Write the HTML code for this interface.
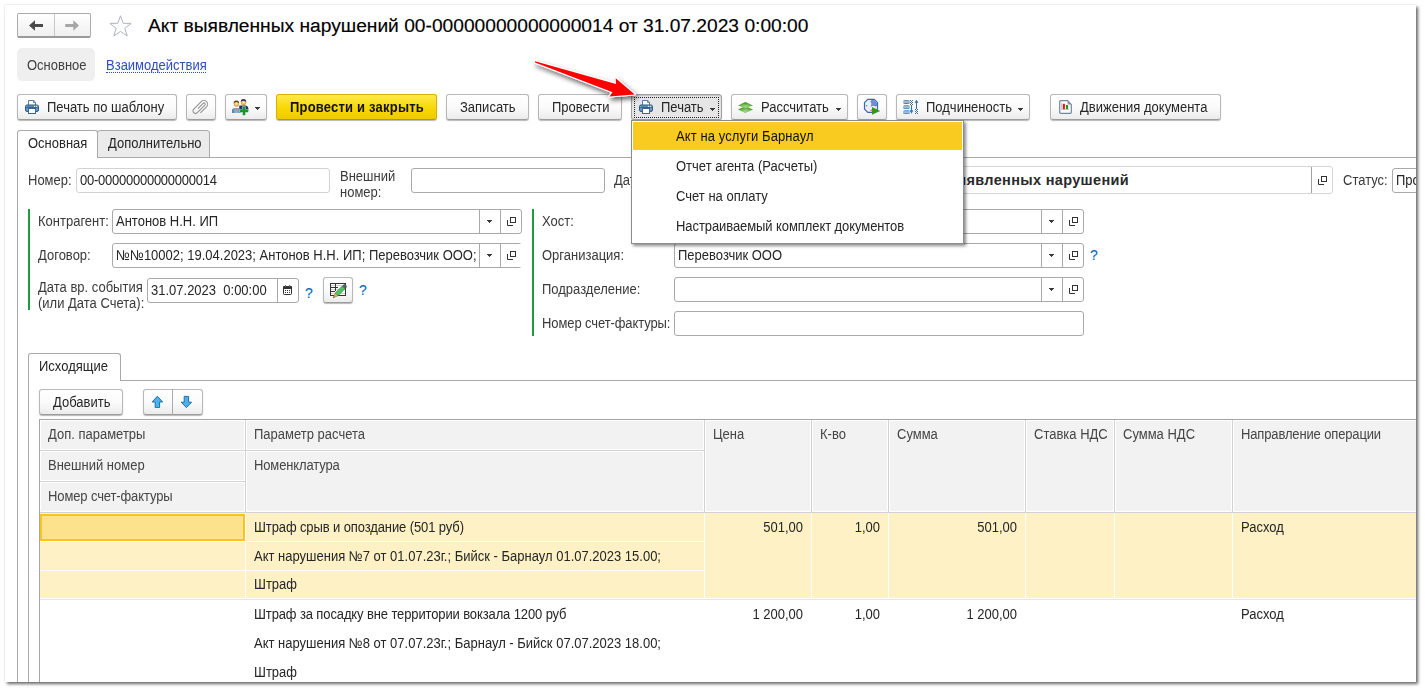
<!DOCTYPE html>
<html><head><meta charset="utf-8">
<style>
*{box-sizing:border-box;margin:0;padding:0}
html,body{width:1425px;height:691px;background:#fff;overflow:hidden;font-family:"Liberation Sans",sans-serif;font-size:13px;color:#262626}
#win{position:absolute;left:5px;top:5px;width:1411px;height:677px;background:#fff;overflow:hidden;box-shadow:2px 2px 3px rgba(0,0,0,.6), -1px -1px 1px rgba(0,0,0,.04)}
#c{position:absolute;left:-5px;top:-5px;width:1425px;height:691px}
.a{position:absolute}
.t{position:absolute;white-space:nowrap;line-height:15px;height:15px;transform:scaleY(1.1);transform-origin:0 12px}
.btn{position:absolute;top:94px;height:26px;border:1px solid #b8b8b8;border-bottom-color:#9c9c9c;border-radius:3px;background:linear-gradient(#ffffff 0%,#fbfbfb 50%,#ececec 100%);box-shadow:0 1px 1px rgba(0,0,0,.28)}
.btn .t{top:5px}
.fld{position:absolute;height:25px;border:1px solid #a9a9a9;border-radius:3px;background:#fff}
.fld .t{top:4px;left:3px}
.sep{position:absolute;top:0;bottom:0;width:1px;background:#a9a9a9}
.dd{position:absolute;width:5px;height:1px;background:#3a3a3a}.dd::before{content:"";position:absolute;left:1px;top:1px;width:3px;height:1px;background:#3a3a3a}.dd::after{content:"";position:absolute;left:2px;top:2px;width:1px;height:1px;background:#3a3a3a}
.lbl{position:absolute;white-space:nowrap;line-height:15px;color:#3a3a3a;transform:scaleY(1.1);transform-origin:0 12px}
.green{position:absolute;width:2px;background:#1e9b3c}
.q{position:absolute;color:#0b6bbd;font-size:14px;line-height:15px;-webkit-text-stroke:.15px #0b6bbd}
.hc{position:absolute;background:#f2f2f2;border:1px solid #fff}
.hl{position:absolute;background:#cfcfcf}
</style></head><body>
<div id="win"><div id="c">

<!-- nav -->
<div class="a" style="left:17px;top:13px;width:74px;height:25px;border:1px solid #ababab;border-bottom:2px solid #9a9a9a;border-radius:2px;background:linear-gradient(#fff,#efefef)"></div>
<div class="a" style="left:54px;top:14px;width:1px;height:22px;background:#c8c8c8"></div>

<!-- title -->
<div class="t" style="left:148px;top:15px;font-size:19.2px;line-height:22px;height:22px;transform:none;color:#000;-webkit-text-stroke:.15px #000">Акт выявленных нарушений 00-00000000000000014 от 31.07.2023 0:00:00</div>

<!-- section nav -->
<div class="a" style="left:17px;top:48px;width:78px;height:33px;background:#efefef;border-radius:5px"></div>
<div class="t" style="left:27px;top:58px;color:#404040">Основное</div>
<div class="t" style="left:106px;top:58px;color:#2b4fbd">Взаимодействия</div>
<div class="a" style="left:106px;top:72px;width:100px;height:0;border-top:1px dotted #2b4fbd"></div>


<!-- nav arrows -->
<svg class="a" style="left:28px;top:19px" width="16" height="13" viewBox="0 0 16 13"><path d="M1 6.5 L7 1.2 V5.1 H15 V7.9 H7 V11.8 Z" fill="#4a4a4a"/></svg>
<svg class="a" style="left:64px;top:19px" width="16" height="13" viewBox="0 0 16 13"><path d="M15 6.5 L9.3 1.2 V5.1 H1.2 V7.9 H9.3 V11.8 Z" fill="#a6a6a6"/></svg>
<!-- star -->
<svg class="a" style="left:107px;top:14px" width="26" height="24" viewBox="0 0 26 24"><path d="M13.5 1.8 L16.2 9.3 L24.1 9.4 L17.8 14.3 L20.2 22 L13.5 17.4 L6.8 22 L9.2 14.3 L2.9 9.4 L10.8 9.3 Z" fill="none" stroke="#adb5bf" stroke-width="1"/></svg>

<!-- toolbar -->
<div class="btn" style="left:17px;width:160px"><span class="t" style="left:29px">Печать по шаблону</span></div>
<div class="btn" style="left:186px;width:30px"></div>
<div class="btn" style="left:225px;width:42px"></div>
<div class="btn" style="left:276px;width:161px;border-color:#d4b200;border-bottom-color:#b89a00;background:linear-gradient(#ffe94a,#f7d600 60%,#efc900)"><span class="t" style="left:13px;font-weight:bold;color:#111;letter-spacing:.2px">Провести и закрыть</span></div>
<div class="btn" style="left:446px;width:83px"><span class="t" style="left:13px">Записать</span></div>
<div class="btn" style="left:538px;width:84px"><span class="t" style="left:13px">Провести</span></div>
<div class="btn" style="left:631px;width:91px;background:#e6e6e6;border-color:#a0a0a0;box-shadow:inset 0 1px 1px rgba(0,0,0,.15), 0 1px 1px rgba(0,0,0,.2)"><div class="a" style="left:2px;top:2px;right:2px;bottom:1px;border:1px dotted #222"></div><span class="t" style="left:29px">Печать</span><div class="dd" style="left:78px;top:13px"></div></div>
<div class="btn" style="left:731px;width:117px"><span class="t" style="left:29px">Рассчитать</span><div class="dd" style="left:104px;top:13px"></div></div>
<div class="btn" style="left:857px;width:30px"></div>
<div class="btn" style="left:896px;width:134px"><span class="t" style="left:29px">Подчиненость</span><div class="dd" style="left:121px;top:13px"></div></div>
<div class="btn" style="left:1050px;width:171px"><span class="t" style="left:29px">Движения документа</span></div>
<div class="dd" style="left:255px;top:107px"></div>

<!-- toolbar icons -->
<svg class="a" style="left:25px;top:100px" width="14" height="14" viewBox="0 0 14 14"><path d="M3.5 5 V0.5 H8.8 L10.5 2.2 V5" fill="#fff" stroke="#5d7d9c"/><path d="M8.5 0.5 V2.5 H10.5" fill="#7f9ab4" stroke="#5d7d9c" stroke-width=".8"/><rect x="0.5" y="5" width="13" height="6.5" rx="1.6" fill="#6b99c6" stroke="#2a5882"/><rect x="1.5" y="6.8" width="11" height="1" fill="#2a5882"/><rect x="9" y="5.8" width="1.2" height="1" fill="#fff"/><rect x="11" y="5.8" width="1.2" height="1" fill="#fff"/><rect x="3.5" y="8.5" width="7" height="5" fill="#fff" stroke="#3b6890"/></svg>
<svg class="a" style="left:639px;top:100px" width="14" height="14" viewBox="0 0 14 14"><path d="M3.5 5 V0.5 H8.8 L10.5 2.2 V5" fill="#fff" stroke="#5d7d9c"/><path d="M8.5 0.5 V2.5 H10.5" fill="#7f9ab4" stroke="#5d7d9c" stroke-width=".8"/><rect x="0.5" y="5" width="13" height="6.5" rx="1.6" fill="#6b99c6" stroke="#2a5882"/><rect x="1.5" y="6.8" width="11" height="1" fill="#2a5882"/><rect x="9" y="5.8" width="1.2" height="1" fill="#fff"/><rect x="11" y="5.8" width="1.2" height="1" fill="#fff"/><rect x="3.5" y="8.5" width="7" height="5" fill="#fff" stroke="#3b6890"/></svg>
<!-- paperclip -->
<svg class="a" style="left:190px;top:97px" width="24" height="20" viewBox="0 0 24 20"><path transform="translate(10.5 10.4) rotate(45) translate(-3.6 -8.7)" d="M2.6 11.3 V4 A1.25 1.25 0 0 1 5.1 4 V14.7 A2.55 2.55 0 0 1 0 14.7 V4 A3.7 3.7 0 0 1 7.4 4 V12.6" fill="none" stroke="#8f8f8f" stroke-width="1.05"/></svg>
<!-- users -->
<svg class="a" style="left:230px;top:97px" width="20" height="20" viewBox="0 0 20 20">
<defs><radialGradient id="face" cx=".5" cy=".45" r=".6"><stop offset="0" stop-color="#fff2b0"/><stop offset=".6" stop-color="#e9b85a"/><stop offset="1" stop-color="#b57a2a"/></radialGradient>
<linearGradient id="lb" x1="0" x2="1"><stop offset="0" stop-color="#4b7aa6"/><stop offset=".5" stop-color="#9fbbd4"/><stop offset="1" stop-color="#4b7aa6"/></linearGradient></defs>
<path d="M9.2 8.8 Q9.6 8.2 11.2 8.6 L15.8 8.6 Q17.9 8.8 18.3 11 V14 H9.2Z" fill="#27306a"/>
<circle cx="13.5" cy="5.6" r="2.6" fill="url(#face)"/><path d="M10.8 5.3 Q10.6 2 13.5 2 Q16.4 2 16.2 5.3 Q15.6 3.6 13.5 3.7 Q11.4 3.6 10.8 5.3Z" fill="#2b2c58"/>
<path d="M2 16 V13.3 Q2 11 4.4 10.9 L8.4 10.9 Q10.8 11 10.8 13.3 V16 Z" fill="url(#lb)"/><path d="M5.9 11 L6.4 16 L7 11 Z" fill="#e86a45"/>
<circle cx="6.4" cy="6.9" r="2.6" fill="url(#face)"/><path d="M3.7 6.7 Q3.5 3.4 6.4 3.4 Q9.3 3.4 9.1 6.7 Q8.5 5 6.4 5.1 Q4.3 5 3.7 6.7Z" fill="#6a3810"/>
<path d="M12.7 9.6 H15.3 V12.6 H18.3 V15.2 H15.3 V18.2 H12.7 V15.2 H9.7 V12.6 H12.7 Z" fill="#179532" stroke="#fff" stroke-width=".7" paint-order="stroke"/>
</svg>
<!-- layers -->
<svg class="a" style="left:734px;top:97px" width="24" height="20" viewBox="0 0 24 20"><defs><radialGradient id="lg" cx=".5" cy=".75" r=".6"><stop offset="0" stop-color="#a6dc80"/><stop offset="1" stop-color="#3f9424"/></radialGradient></defs><path d="M11.3 9 L19 12.4 L11.3 15.9 L4 12.4 Z" fill="url(#lg)"/><path d="M11.3 4.9 L19 8.4 L11.3 10.9 L4 8.4 Z" fill="url(#lg)" stroke="#fff" stroke-width=".5" paint-order="stroke"/></svg>
<!-- clock -->
<svg class="a" style="left:861px;top:96px" width="22" height="21" viewBox="0 0 22 21"><path d="M6.8 3.4 H13.2 L16.5 6.7 V13.1 L13.2 16.4 H6.8 L3.5 13.1 V6.7 Z" fill="#e9f0fb" stroke="#3b64ae" stroke-width="1.2"/><path d="M10.2 9.9 V3.9 H13 L16 6.9 V9.9 Z" fill="#6b8fd0"/><circle cx="10.2" cy="9.9" r=".5" fill="#3b64ae"/><circle cx="10.2" cy="5.5" r=".75" fill="#f24a3a"/><circle cx="5.6" cy="9.8" r=".75" fill="#f24a3a"/><circle cx="14.5" cy="9.8" r=".75" fill="#f24a3a"/><circle cx="10.2" cy="14.3" r=".75" fill="#f24a3a"/><path d="M11 11 L19.2 15 L11 18.8 Z" fill="#2f9a12"/></svg>
<!-- hierarchy -->
<svg class="a" style="left:900px;top:97px" width="22" height="20" viewBox="0 0 22 20"><defs><linearGradient id="bg1" x1="0" y1="0" x2="0" y2="1"><stop offset="0" stop-color="#4a7aa8"/><stop offset=".5" stop-color="#b9d0e4"/><stop offset="1" stop-color="#3e6e9c"/></linearGradient></defs>
<rect x="3" y="3" width="7" height="3.9" rx="1.9" fill="url(#bg1)"/><rect x="3" y="8.2" width="7" height="3.9" rx="1.9" fill="url(#bg1)"/><rect x="3" y="13.2" width="7" height="3.9" rx="1.9" fill="url(#bg1)"/>
<g fill="#3e6fa0"><rect x="10" y="3" width="1" height="1"/><rect x="12" y="3" width="1" height="1"/><rect x="11" y="4" width="1" height="1"/><rect x="10" y="5" width="1" height="1"/><rect x="12" y="5" width="1" height="1"/><rect x="11" y="6" width="1" height="1"/><rect x="10" y="7" width="1" height="1"/><rect x="12" y="7" width="1" height="1"/>
<rect x="15" y="12" width="1" height="1"/><rect x="17" y="12" width="1" height="1"/><rect x="16" y="13" width="1" height="1"/><rect x="15" y="14" width="1" height="1"/><rect x="17" y="14" width="1" height="1"/><rect x="16" y="15" width="1" height="1"/><rect x="15" y="16" width="1" height="1"/><rect x="17" y="16" width="1" height="1"/></g>
<path d="M11.5 8 V14" stroke="#3e6fa0" stroke-width="1.1"/><path d="M9.6 13.2 H13.4 L11.5 16.8Z" fill="#3e6fa0"/>
<path d="M16.5 5 V12" stroke="#3e6fa0" stroke-width="1.1"/><path d="M14.4 5.8 H18.6 L16.5 2.8Z" fill="#3e6fa0"/></svg>
<!-- doc chart -->
<svg class="a" style="left:1059px;top:100px" width="13" height="14" viewBox="0 0 13 14"><path d="M0.7 1.7 Q0.7 0.7 1.7 0.7 H8.6 L12.3 4.4 V12.3 Q12.3 13.3 11.3 13.3 H1.7 Q0.7 13.3 0.7 12.3 Z" fill="#fff" stroke="#71859a" stroke-width="1.2"/><path d="M8.6 0.7 V4.4 H12.3 Z" fill="#8596a8"/><path d="M2.6 2.8 V9.5" stroke="#9fb0c0" stroke-width=".7"/><path d="M2.6 9.4 H10" stroke="#c9a0a0" stroke-width=".7"/><rect x="3.8" y="3.8" width="2.1" height="5.4" fill="#ee1111"/><rect x="7" y="5" width="2.1" height="4.2" fill="#1a9a25"/></svg>

<!-- outer tabs -->
<div class="a" style="left:17px;top:157px;width:1400px;height:1px;background:#a9a9a9"></div>
<div class="a" style="left:17px;top:157px;width:1px;height:530px;background:#a9a9a9"></div>
<div class="a" style="left:97px;top:130px;width:113px;height:28px;background:#ebebeb;border:1px solid #a9a9a9;border-radius:3px 3px 0 0"></div>
<div class="a" style="left:17px;top:130px;width:81px;height:28px;background:#fff;border:1px solid #a9a9a9;border-bottom:none;border-radius:3px 3px 0 0"></div>
<div class="t" style="left:28px;top:136px">Основная</div>
<div class="t" style="left:108px;top:136px">Дополнительно</div>

<!-- row 1 -->
<div class="lbl" style="left:28px;top:173px">Номер:</div>
<div class="fld" style="left:76px;top:168px;width:254px;border-color:#d2d2d2"><span class="t" style="letter-spacing:-.25px">00-00000000000000014</span></div>
<div class="lbl" style="left:340px;top:169px">Внешний</div><div class="lbl" style="left:340px;top:185px">номер:</div>
<div class="fld" style="left:411px;top:168px;width:194px"></div>
<div class="lbl" style="left:614px;top:173px">Дата:</div>
<div class="fld" style="left:700px;top:166px;width:633px;height:28px;border-color:#d6d6d6"><span class="t" style="left:auto;right:203px;top:5px;font-size:14.5px;line-height:17px;height:17px;transform:none;font-weight:bold;letter-spacing:.33px;color:#2a2a2a">Акт выявленных нарушений</span><div class="sep" style="left:610px;background:#a0a0a0"></div>
<svg class="a" style="left:617px;top:9px" width="10" height="10" viewBox="0 0 10 10"><rect x="3.5" y="0.5" width="5" height="5" fill="none" stroke="#333"/><path d="M0.5 3 V8.5 H6" fill="none" stroke="#333"/></svg></div>
<div class="lbl" style="left:1343px;top:173px">Статус:</div>
<div class="fld" style="left:1392px;top:168px;width:80px;border-color:#a9a9a9"><span class="t">Проведен</span></div>

<!-- left group -->
<div class="green" style="left:28px;top:209px;height:101px"></div>
<div class="lbl" style="left:38px;top:214px">Контрагент:</div>
<div class="fld" style="left:112px;top:209px;width:410px"><span class="t">Антонов Н.Н. ИП</span><div class="sep" style="left:366px"></div><div class="sep" style="left:387px"></div><div class="dd" style="left:374px;top:10px"></div><svg class="a" style="left:394px;top:7px" width="10" height="10" viewBox="0 0 10 10"><rect x="3.5" y="0.5" width="5" height="5" fill="none" stroke="#333"/><path d="M0.5 3 V8.5 H6" fill="none" stroke="#333"/></svg></div>
<div class="lbl" style="left:38px;top:248px">Договор:</div>
<div class="fld" style="left:112px;top:243px;width:410px"><span class="t">№№10002; 19.04.2023; Антонов Н.Н. ИП; Перевозчик ООО;</span><div class="a" style="left:366px;top:0;bottom:0;width:43px;background:#fff"></div><div class="sep" style="left:366px"></div><div class="sep" style="left:387px"></div><div class="dd" style="left:374px;top:10px"></div><svg class="a" style="left:394px;top:7px" width="10" height="10" viewBox="0 0 10 10"><rect x="3.5" y="0.5" width="5" height="5" fill="none" stroke="#333"/><path d="M0.5 3 V8.5 H6" fill="none" stroke="#333"/></svg></div>
<div class="lbl" style="left:38px;top:280px">Дата вр. события</div><div class="lbl" style="left:38px;top:296px">(или Дата Счета):</div>
<div class="fld" style="left:147px;top:278px;width:152px"><span class="t">31.07.2023&nbsp; 0:00:00</span><div class="sep" style="left:129px"></div>
<svg class="a" style="left:135px;top:6px" width="10" height="11" viewBox="0 0 10 11"><rect x="0.5" y="1.5" width="8" height="8" rx=".8" fill="#fff" stroke="#333"/><rect x="0" y="1" width="9" height="3" rx=".8" fill="#333"/><rect x="2" y="0" width="1" height="2" fill="#666"/><rect x="6" y="0" width="1" height="2" fill="#666"/><g fill="#333"><rect x="2" y="5" width="1" height="1"/><rect x="4" y="5" width="1" height="1"/><rect x="6" y="5" width="1" height="1"/><rect x="2" y="7" width="1" height="1"/><rect x="4" y="7" width="1" height="1"/><rect x="6" y="7" width="1" height="1"/></g></svg></div>
<div class="q" style="left:305px;top:286px">?</div>
<div class="btn" style="left:323px;top:277px;width:30px;height:26px"></div>
<svg class="a" style="left:326px;top:279px" width="24" height="22" viewBox="0 0 24 22"><rect x="4.5" y="4.5" width="15" height="12" fill="#fff" stroke="#333"/><path d="M5 6.6 H19 M5 10.6 H19 M5 14.6 H19" stroke="#cfcfcf" stroke-width="1"/><path d="M5 8.5 H12 M5 12.5 H9 M9.5 5 V12" stroke="#333" stroke-width="1"/><path d="M9.1 14.1 L16.1 7.1 L18.9 9.9 L11.9 16.9 Z" fill="#52c35e" stroke="#2a8a3a" stroke-width=".6"/><path d="M16.1 7.1 L17.8 5.4 Q18.5 4.8 19.2 5.4 L20.6 6.8 Q21.2 7.5 20.6 8.2 L18.9 9.9 Z" fill="#4f5c6c"/><path d="M9.1 14.1 L11.9 16.9 L7.2 18.8 Z" fill="#e4b660" stroke="#7a5a2a" stroke-width=".4"/><path d="M7.2 18.8 L8 17.2 L8.8 18 Z" fill="#333"/></svg>
<div class="q" style="left:359px;top:283px">?</div>

<!-- right group -->
<div class="green" style="left:532px;top:209px;height:127px"></div>
<div class="lbl" style="left:542px;top:214px">Хост:</div>
<div class="fld" style="left:674px;top:209px;width:410px"><div class="sep" style="left:366px"></div><div class="sep" style="left:387px"></div><div class="dd" style="left:374px;top:10px"></div><svg class="a" style="left:394px;top:7px" width="10" height="10" viewBox="0 0 10 10"><rect x="3.5" y="0.5" width="5" height="5" fill="none" stroke="#333"/><path d="M0.5 3 V8.5 H6" fill="none" stroke="#333"/></svg></div>
<div class="lbl" style="left:542px;top:248px">Организация:</div>
<div class="fld" style="left:674px;top:243px;width:410px"><span class="t">Перевозчик ООО</span><div class="sep" style="left:366px"></div><div class="sep" style="left:387px"></div><div class="dd" style="left:374px;top:10px"></div><svg class="a" style="left:394px;top:7px" width="10" height="10" viewBox="0 0 10 10"><rect x="3.5" y="0.5" width="5" height="5" fill="none" stroke="#333"/><path d="M0.5 3 V8.5 H6" fill="none" stroke="#333"/></svg></div>
<div class="q" style="left:1090px;top:248px">?</div>
<div class="lbl" style="left:542px;top:282px">Подразделение:</div>
<div class="fld" style="left:674px;top:277px;width:410px"><div class="sep" style="left:366px"></div><div class="sep" style="left:387px"></div><div class="dd" style="left:374px;top:10px"></div><svg class="a" style="left:394px;top:7px" width="10" height="10" viewBox="0 0 10 10"><rect x="3.5" y="0.5" width="5" height="5" fill="none" stroke="#333"/><path d="M0.5 3 V8.5 H6" fill="none" stroke="#333"/></svg></div>
<div class="lbl" style="left:542px;top:316px;letter-spacing:-.1px">Номер счет-фактуры:</div>
<div class="fld" style="left:674px;top:311px;width:410px"></div>

<!-- inner tabs -->
<div class="a" style="left:28px;top:380px;width:1400px;height:1px;background:#a9a9a9"></div>
<div class="a" style="left:28px;top:380px;width:1px;height:310px;background:#a9a9a9"></div>
<div class="a" style="left:28px;top:353px;width:93px;height:28px;background:#fff;border:1px solid #a9a9a9;border-bottom:none;border-radius:3px 3px 0 0"></div>
<div class="t" style="left:39px;top:359px">Исходящие</div>

<div class="btn" style="left:39px;top:389px;width:84px"><span class="t" style="left:13px">Добавить</span></div>
<div class="btn" style="left:143px;top:389px;width:60px"></div>
<div class="a" style="left:172px;top:389px;width:1px;height:26px;background:#a9a9a9"></div>
<svg class="a" style="left:150px;top:395px" width="14" height="13" viewBox="0 0 14 13"><path d="M7.4 1.2 L12.6 7 H9.6 V12.6 H5.2 V7 H2.2 Z" fill="#4cb3ea" stroke="#1e6fae" stroke-width="1" stroke-linejoin="miter"/></svg>
<svg class="a" style="left:179px;top:395px" width="14" height="13" viewBox="0 0 14 13"><path d="M5.2 1.4 H9.6 V7.2 H12.6 L7.4 12.6 L2.2 7.2 H5.2 Z" fill="#4cb3ea" stroke="#1e6fae" stroke-width="1" stroke-linejoin="miter"/></svg>

<!-- table -->
<div class="a" style="left:39px;top:419px;width:1390px;height:1px;background:#a5a5a5"></div>
<div class="a" style="left:39px;top:419px;width:1px;height:280px;background:#a5a5a5"></div>
<div class="a" style="left:40px;top:420px;width:1390px;height:93px;background:#d2d2d2"></div>
<div class="hc" style="left:40px;top:420px;width:205px;height:30px"></div>
<div class="hc" style="left:40px;top:451px;width:205px;height:30px"></div>
<div class="hc" style="left:40px;top:482px;width:205px;height:30px"></div>
<div class="hc" style="left:246px;top:420px;width:458px;height:30px"></div>
<div class="hc" style="left:246px;top:451px;width:458px;height:61px"></div>
<div class="hc" style="left:705px;top:420px;width:106px;height:92px"></div>
<div class="hc" style="left:812px;top:420px;width:76px;height:92px"></div>
<div class="hc" style="left:889px;top:420px;width:136px;height:92px"></div>
<div class="hc" style="left:1026px;top:420px;width:88px;height:92px"></div>
<div class="hc" style="left:1115px;top:420px;width:117px;height:92px"></div>
<div class="hc" style="left:1233px;top:420px;width:300px;height:92px"></div>
<div class="t" style="left:48px;top:427px;color:#454545">Доп. параметры</div>
<div class="t" style="left:48px;top:458px;color:#454545">Внешний номер</div>
<div class="t" style="left:48px;top:489px;color:#454545;letter-spacing:-.12px">Номер счет-фактуры</div>
<div class="t" style="left:254px;top:427px;color:#454545">Параметр расчета</div>
<div class="t" style="left:254px;top:458px;color:#454545;letter-spacing:-.14px">Номенклатура</div>
<div class="t" style="left:713px;top:427px;color:#454545">Цена</div>
<div class="t" style="left:820px;top:427px;color:#454545">К-во</div>
<div class="t" style="left:897px;top:427px;color:#454545">Сумма</div>
<div class="t" style="left:1034px;top:427px;color:#454545">Ставка НДС</div>
<div class="t" style="left:1123px;top:427px;color:#454545">Сумма НДС</div>
<div class="t" style="left:1241px;top:427px;color:#454545;letter-spacing:-.14px">Направление операции</div>
<div class="a" style="left:40px;top:513px;width:1390px;height:85px;background:#fef1c6"></div>
<div class="a" style="left:40px;top:599px;width:1390px;height:1px;background:#e6e6e6"></div>
<div class="a" style="left:245px;top:513px;width:1px;height:85px;background:#fff"></div>
<div class="a" style="left:704px;top:513px;width:1px;height:85px;background:#fff"></div>
<div class="a" style="left:811px;top:513px;width:1px;height:85px;background:#fff"></div>
<div class="a" style="left:888px;top:513px;width:1px;height:85px;background:#fff"></div>
<div class="a" style="left:1025px;top:513px;width:1px;height:85px;background:#fff"></div>
<div class="a" style="left:1114px;top:513px;width:1px;height:85px;background:#fff"></div>
<div class="a" style="left:1232px;top:513px;width:1px;height:85px;background:#fff"></div>
<div class="a" style="left:40px;top:541px;width:205px;height:1px;background:#fff"></div>
<div class="a" style="left:246px;top:541px;width:458px;height:1px;background:#fff"></div>
<div class="a" style="left:40px;top:570px;width:205px;height:1px;background:#fff"></div>
<div class="a" style="left:246px;top:570px;width:458px;height:1px;background:#fff"></div>
<div class="a" style="left:40px;top:514px;width:205px;height:27px;background:#fde28e;border:2px solid #f8c51a"></div>
<div class="t" style="left:254px;top:520px;letter-spacing:-.11px">Штраф срыв и опоздание (501 руб)</div>
<div class="t" style="left:254px;top:549px">Акт нарушения №7 от 01.07.23г.; Бийск - Барнаул 01.07.2023 15.00;</div>
<div class="t" style="left:254px;top:577px">Штраф</div>
<div class="t" style="right:622px;top:520px">501,00</div>
<div class="t" style="right:545px;top:520px">1,00</div>
<div class="t" style="right:408px;top:520px">501,00</div>
<div class="t" style="left:1241px;top:520px">Расход</div>
<div class="t" style="left:254px;top:607px;letter-spacing:-.12px">Штраф за посадку вне территории вокзала 1200 руб</div>
<div class="t" style="left:254px;top:636px">Акт нарушения №8 от 07.07.23г.; Барнаул - Бийск 07.07.2023 18.00;</div>
<div class="t" style="left:254px;top:665px">Штраф</div>
<div class="t" style="right:622px;top:607px">1 200,00</div>
<div class="t" style="right:545px;top:607px">1,00</div>
<div class="t" style="right:408px;top:607px">1 200,00</div>
<div class="t" style="left:1241px;top:607px">Расход</div>

<!-- menu -->
<div class="a" style="left:631px;top:120px;width:333px;height:124px;background:#fff;border:1px solid #8c8c8c;box-shadow:2px 2px 3px rgba(0,0,0,.45)"></div>
<div class="a" style="left:633px;top:122px;width:329px;height:28px;background:#f9ca1f"></div>
<div class="t" style="left:676px;top:129px;color:#111;letter-spacing:.1px">Акт на услуги Барнаул</div>
<div class="t" style="left:676px;top:159px">Отчет агента (Расчеты)</div>
<div class="t" style="left:676px;top:189px">Счет на оплату</div>
<div class="t" style="left:676px;top:219px;letter-spacing:-.08px">Настраиваемый комплект документов</div>

<!-- arrow -->
<svg class="a" style="left:520px;top:50px;overflow:visible" width="130" height="60" viewBox="520 50 130 60">
<defs><filter id="sh" x="-30%" y="-80%" width="160%" height="260%"><feGaussianBlur in="SourceAlpha" stdDeviation="2.6"/><feOffset dx="2" dy="3" result="b"/><feComponentTransfer><feFuncA type="linear" slope=".6"/></feComponentTransfer><feMerge><feMergeNode/><feMergeNode in="SourceGraphic"/></feMerge></filter></defs>
<g filter="url(#sh)"><path d="M535 61.2 L616 84.1 L615.7 78.3 L634.8 94.5 L609.4 96.5 L612.5 92.2 L535 62.5 Z" fill="#fff" stroke="#fff" stroke-width="2.2" stroke-linejoin="round"/><path d="M535 61.2 L616 84.1 L615.7 78.3 L634.8 94.5 L609.4 96.5 L612.5 92.2 L535 62.5 Z" fill="#ff0000"/></g>
</svg>

</div></div>
</body></html>
